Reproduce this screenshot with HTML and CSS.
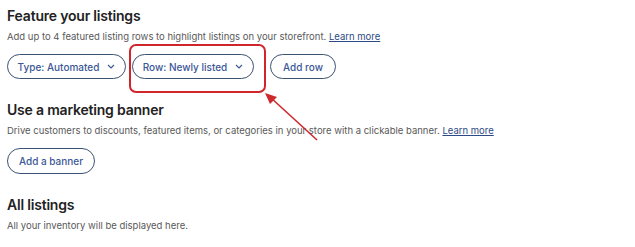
FILE: index.html
```html
<!DOCTYPE html>
<html>
<head>
<meta charset="utf-8">
<link rel="stylesheet" href="styles.css">
</head>
<body>
<div class="page">
  <section class="section">
    <h2 class="title">Feature your listings</h2>
    <p class="desc">Add up to 4 featured listing rows to highlight listings on your storefront. <a class="link" href="#">Learn more</a></p>
    <div class="btn-row">
      <button class="pill">Type: Automated <span class="chev"><svg width="8" height="5" viewBox="0 0 8 5"><path d="M1 1l3 3 3-3" fill="none" stroke="currentColor" stroke-width="1.2"/></svg></span></button>
      <div class="highlight-wrap">
        <button class="pill pill-wide">Row: Newly listed <span class="chev"><svg width="8" height="5" viewBox="0 0 8 5"><path d="M1 1l3 3 3-3" fill="none" stroke="currentColor" stroke-width="1.2"/></svg></span></button>
        <span class="highlight"></span>
      </div>
      <button class="pill pill-add">Add row</button>
    </div>
  </section>
  <section class="section">
    <h2 class="title">Use a marketing banner</h2>
    <p class="desc">Drive customers to discounts, featured items, or categories in your store with a clickable banner. <a class="link" href="#">Learn more</a></p>
    <div class="btn-row">
      <button class="pill pill-banner">Add a banner</button>
    </div>
  </section>
  <section class="section">
    <h2 class="title">All listings</h2>
    <p class="desc">All your inventory will be displayed here.</p>
  </section>
  <svg class="arrow" width="80" height="60" viewBox="0 0 80 60">
    <line x1="55" y1="47" x2="8" y2="4" stroke="#cc2a2e" stroke-width="1.6"/>
    <path d="M3 0 L15 4 L8 11 Z" fill="#cc2a2e"/>
  </svg>
</div>
</body>
</html>
```
FILE: styles.css
```css
html, body {
  margin: 0;
  padding: 0;
  background: #ffffff;
}
.page {
  position: relative;
  padding: 6px 7px 0 7px;
  font-family: Inter, "Noto Sans", sans-serif;
  color: #222222;
}
.title {
  margin: 0;
  font-size: 14px;
  line-height: 20px;
  font-weight: 600;
  color: #222222;
  letter-spacing: -0.2px;
}
.desc {
  margin: 4px 0 0 0;
  font-size: 9.5px;
  line-height: 14px;
  color: #595959;
}
.link {
  color: #2d4a86;
  text-decoration: underline;
}
.btn-row {
  display: flex;
  align-items: center;
  margin-top: 10px;
  margin-bottom: 21px;
}
.pill {
  display: inline-flex;
  align-items: center;
  justify-content: center;
  white-space: nowrap;
  height: 25px;
  box-sizing: border-box;
  padding: 0;
  border: 1px solid #3c5273;
  border-radius: 13px;
  background: #ffffff;
  color: #3b5796;
  font-family: Inter, "Noto Sans", sans-serif;
  font-size: 10px;
  font-weight: 500;
  width: 119px;
}
.chev {
  display: inline-flex;
  margin-left: 8px;
  color: #3b5796;
}
.highlight-wrap {
  position: relative;
  display: flex;
  margin-left: 6px;
}
.pill-wide {
  width: 122px;
}
.highlight {
  position: absolute;
  left: -3px;
  top: -10px;
  width: 137px;
  height: 49px;
  box-sizing: border-box;
  border: 2px solid #d0252b;
  border-radius: 7px;
}
.pill-add {
  width: 66px;
  margin-left: 16px;
}
.pill-banner {
  width: 88px;
  height: 26px;
}
.arrow {
  position: absolute;
  left: 262px;
  top: 93px;
}
```
